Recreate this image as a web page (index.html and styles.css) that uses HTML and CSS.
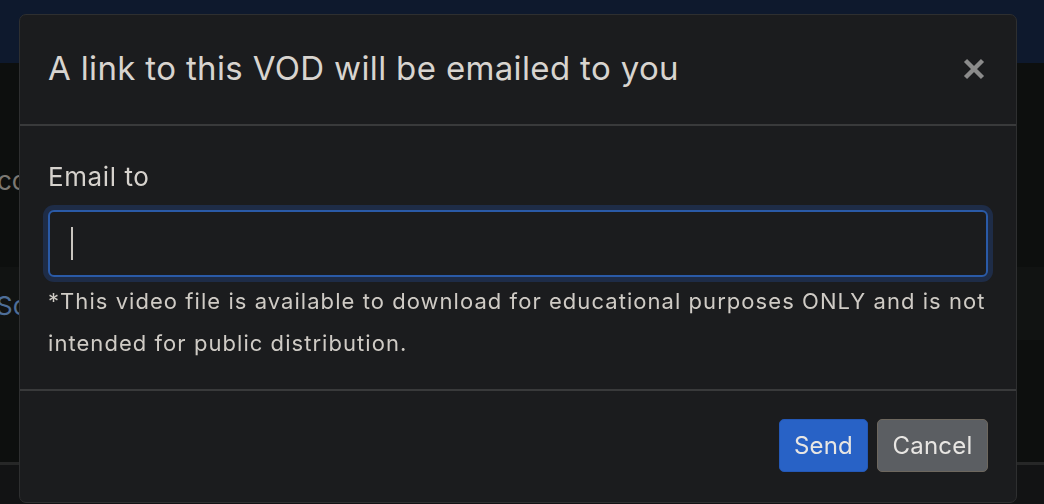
FILE: index.html
```html
<!DOCTYPE html>
<html lang="en">
<head>
<meta charset="utf-8">
<title>Email VOD</title>
<link rel="stylesheet" href="styles.css">
</head>
<body>
<div class="page">
  <header class="topbar"></header>
  <section class="content">
    <div class="row row-plain"><span class="bg-text">co</span></div>
    <div class="row row-alt"><span class="bg-link">Sc</span></div>
    <div class="row row-fill"></div>
    <div class="row-foot"></div>
  </section>
</div>

<div class="modal" role="dialog" aria-labelledby="modal-title">
  <div class="modal-header">
    <h5 class="modal-title" id="modal-title">A link to this VOD will be emailed to you</h5>
    <button class="close" type="button" aria-label="Close">
      <svg width="22" height="22" viewBox="0 0 22 22" aria-hidden="true"><path d="M2.5 2.5 L19.5 19.5 M19.5 2.5 L2.5 19.5" stroke="#8b8b8b" stroke-width="4.4" stroke-linecap="butt"/></svg>
    </button>
  </div>
  <div class="modal-body">
    <label class="label">Email to</label>
    <div class="input" role="textbox"><span class="caret"></span></div>
    <p class="help">*This video file is available to download for educational purposes ONLY and is not intended for public distribution.</p>
  </div>
  <div class="modal-footer">
    <button class="btn btn-primary" type="button">Send</button>
    <button class="btn btn-secondary" type="button">Cancel</button>
  </div>
</div>
</body>
</html>
```

FILE: styles.css
```css
html, body {
  margin: 0;
  padding: 0;
}
body {
  width: 1044px;
  height: 504px;
  overflow: hidden;
  background: #0d0f0e;
  font-family: "Inter", "Noto Sans", sans-serif;
  color: #d8d4cf;
}
.page {
  display: flex;
  flex-direction: column;
  height: 504px;
}
.topbar {
  height: 63px;
  background: #0e192d;
}
.content {
  flex: 1;
  display: flex;
  flex-direction: column;
}
.row {
  display: flex;
  align-items: center;
  font-size: 26px;
}
.row-plain {
  height: 204px;
  background: #0d0f0e;
  padding-top: 30px;
  box-sizing: border-box;
  align-items: flex-start;
}
.bg-text {
  color: #7b7873;
  margin-left: -3px;
  margin-top: 72px;
}
.row-alt {
  height: 73px;
  background: #111312;
}
.bg-link {
  color: #4e6e98;
  margin-left: -4px;
  padding-top: 4px;
}
.row-fill {
  height: 122px;
  background: #0d0f0e;
}
.row-foot {
  flex: 1;
  border-top: 3px solid #262727;
  background: #121314;
}

.modal {
  position: fixed;
  left: 19px;
  top: 14px;
  width: 998px;
  height: 489px;
  box-sizing: border-box;
  background: #1b1c1e;
  border: 1px solid #2e2f30;
  border-radius: 7px;
  display: flex;
  flex-direction: column;
}
.modal-header {
  height: 111px;
  box-sizing: border-box;
  padding: 0 31px 0 28px;
  display: flex;
  align-items: center;
  justify-content: space-between;
  border-bottom: 2px solid #393a3b;
}
.modal-title {
  margin: 0;
  font-size: 33px;
  font-weight: 400;
  color: #d8d4cf;
  letter-spacing: 0.35px;
  padding-bottom: 4px;
}
.close {
  background: none;
  border: 0;
  padding: 0;
  width: 22px;
  height: 22px;
  display: flex;
  margin-top: -2px;
}
.modal-body {
  height: 265px;
  box-sizing: border-box;
  padding: 36px 28px 0 28px;
  border-bottom: 2px solid #393a3b;
  display: flex;
  flex-direction: column;
}
.label {
  font-size: 26px;
  line-height: 30px;
  letter-spacing: 0.6px;
  color: #d6d2cd;
}
.input {
  margin-top: 18px;
  height: 67px;
  box-sizing: border-box;
  border: 2px solid #2a5aa7;
  border-radius: 6px;
  background: #1b1c1e;
  box-shadow: 0 0 0 5px #1e2c47;
  display: flex;
  align-items: center;
  padding-left: 21px;
}
.caret {
  width: 2px;
  height: 33px;
  background: #c9c5bf;
}
.help {
  margin: 3px 0 0;
  font-size: 22px;
  line-height: 42px;
  letter-spacing: 1.05px;
  color: #cfcbc5;
}
.modal-footer {
  flex: 1;
  display: flex;
  justify-content: flex-end;
  align-items: flex-start;
  gap: 9px;
  padding: 28px 28px 0 0;
}
.btn {
  height: 53px;
  box-sizing: border-box;
  border-radius: 5px;
  font-family: inherit;
  font-size: 24px;
  letter-spacing: 0.2px;
  color: #e8e6e3;
  padding: 0;
  border: 1px solid transparent;
}
.btn-primary {
  width: 89px;
  background: #2862c6;
  border-color: #2458b6;
}
.btn-secondary {
  width: 111px;
  background: #5b5e62;
  border-color: #6d675e;
}
```
